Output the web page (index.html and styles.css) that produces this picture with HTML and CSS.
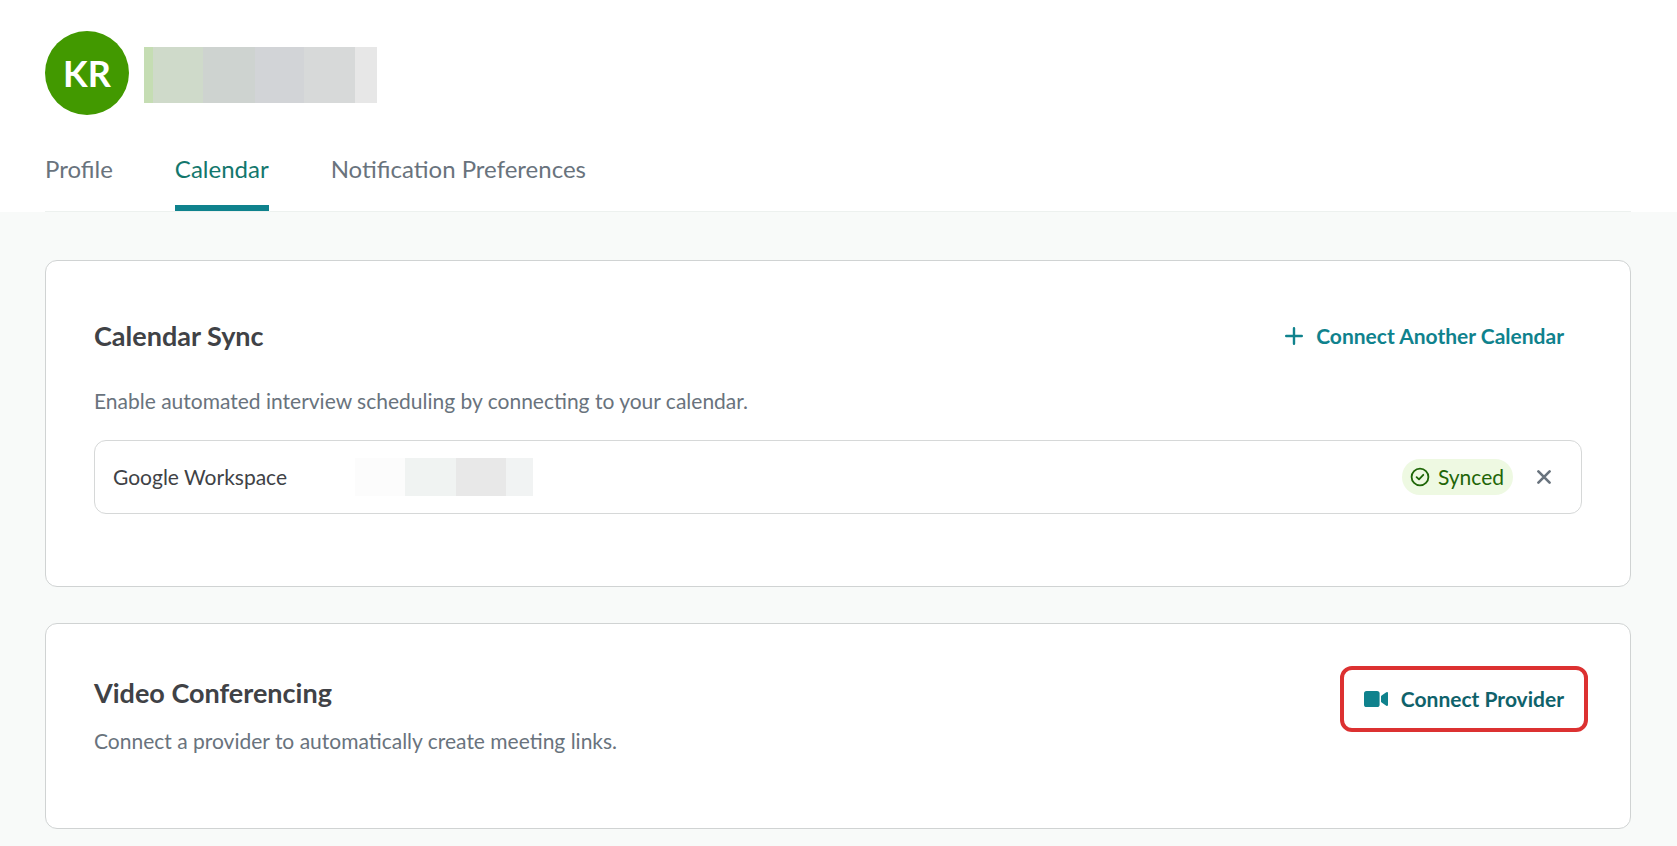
FILE: index.html
```html
<!DOCTYPE html>
<html lang="en">
<head>
<meta charset="utf-8">
<title>Calendar settings</title>
<link rel="stylesheet" href="styles.css">
</head>
<body>
<header class="header">
  <div class="user">
    <span class="avatar">KR</span>
    <span class="user-name" aria-hidden="true"></span>
  </div>
  <nav class="tabs">
    <a class="tab" href="#profile">Profile</a>
    <a class="tab tab-active" href="#calendar" aria-current="page">Calendar</a>
    <a class="tab" href="#notifications">Notification Preferences</a>
  </nav>
</header>
<main class="content">
  <section class="card card-sync">
    <div class="card-head">
      <h2 class="card-title">Calendar Sync</h2>
      <button class="action" type="button">
        <svg class="icon-plus" viewBox="0 0 18 18" aria-hidden="true"><path d="M9 1.200v15.600M1.200 9h15.600" fill="none" stroke="currentColor" stroke-width="2.4" stroke-linecap="round"/></svg>
        Connect Another Calendar
      </button>
    </div>
    <p class="card-text">Enable automated interview scheduling by connecting to your calendar.</p>
    <div class="account">
      <span class="account-name">Google Workspace</span>
      <span class="account-mail" aria-hidden="true"></span>
      <span class="badge">
        <svg class="icon-check" viewBox="0 0 20 20" aria-hidden="true"><g fill="none" stroke="currentColor" stroke-width="1.8" stroke-linecap="round" stroke-linejoin="round"><circle cx="10" cy="10" r="8.4"/><path d="M6.600 10.200l2.400 2.200 4.300-4.600"/></g></svg>
        Synced
      </span>
      <button class="remove" type="button" aria-label="Remove calendar">
        <svg class="icon-close" viewBox="0 0 14 14" aria-hidden="true"><path d="M1.400 1.400l11.200 11.200M12.600 1.400L1.400 12.600" fill="none" stroke="currentColor" stroke-width="2.600" stroke-linecap="round"/></svg>
      </button>
    </div>
  </section>
  <section class="card card-video">
    <div class="card-intro">
      <h2 class="card-title">Video Conferencing</h2>
      <p class="card-text">Connect a provider to automatically create meeting links.</p>
    </div>
    <button class="action action-highlight" type="button">
      <svg class="icon-video" viewBox="0 0 24 16" aria-hidden="true"><rect width="15.600" height="16" rx="2.600" fill="currentColor"/><path d="M17 5.600v4.900q0 .7.6 1.100l4.700 3.100q1.700.8 1.700-.9V2.200q0-1.700-1.700-.9L17.600 4.500q-.6.400-.6 1.100z" fill="currentColor"/></svg>
      Connect Provider
    </button>
  </section>
</main>
</body>
</html>
```

FILE: styles.css
```css
* { box-sizing: border-box; }

body {
  margin: 0;
  background: #f8faf9;
  color: #404246;
  font-family: Lato, "Liberation Sans", sans-serif;
  font-size: 21px;
  line-height: 32px;
}

h2, p { margin: 0; }

button {
  border: 0;
  background: none;
  font: inherit;
  cursor: pointer;
}

svg { display: block; flex: none; }

.header {
  padding: 31px 46px 0 45px;
  background: #fff;
}

.user {
  display: flex;
  align-items: center;
  gap: 15px;
}

.avatar {
  display: grid;
  place-items: center;
  width: 84px;
  height: 84px;
  border-radius: 50%;
  background: #429900;
  color: #fff;
  font-size: 36px;
  font-weight: 700;
}

.user-name {
  width: 233px;
  height: 56px;
  margin-top: 4px;
  background: linear-gradient(90deg,
    #c5ddb3 0 9px, #cfdaca 9px 59px, #ced3d0 59px 111px,
    #d2d4d7 111px 160px, #d7d9d9 160px 211px, #e7e7e7 211px);
}

.tabs {
  display: flex;
  gap: 62px;
  margin-top: 36px;
  border-bottom: 1px solid #edf1ef;
}

.tab {
  padding: 2px 0 20px;
  border-bottom: 6px solid transparent;
  color: #69737d;
  font-size: 24px;
  text-decoration: none;
}

.tab-active {
  border-color: #0f828d;
  color: #13776d;
}

.content {
  display: flex;
  flex-direction: column;
  gap: 36px;
  padding: 48px 46px 17px 45px;
}

.card {
  padding: 48px;
  border: 1px solid #d0d3d3;
  border-radius: 12px;
  background: #fff;
}

.card-sync { padding-bottom: 72px; }

.card-head, .card-video {
  display: flex;
  justify-content: space-between;
}

.card-head { align-items: center; }

.card-video {
  align-items: flex-start;
  padding-bottom: 71px;
}

.card-title {
  font-size: 27px;
  font-weight: 700;
  line-height: 42px;
}

.card-text { color: #69737d; }

.card-head + .card-text { margin: 22px 0 23px; }

.card-intro {
  display: grid;
  gap: 11px;
}

.action {
  display: flex;
  align-items: center;
  gap: 13px;
  padding: 11px 18px;
  border-radius: 6px;
  color: #0f828d;
  font-weight: 700;
}

.action-highlight {
  outline: 4px solid #dc3131;
  outline-offset: 2px;
  color: #0f626b;
}

.icon-plus { width: 18px; height: 18px; }
.icon-video { width: 24px; height: 16px; color: #0f828d; }
.icon-check { width: 20px; height: 20px; }
.icon-close { width: 14px; height: 14px; }

.account {
  display: flex;
  align-items: center;
  padding: 17px 18px;
  border: 1px solid #d6d8d8;
  border-radius: 12px;
}

.account-mail {
  width: 178px;
  height: 38px;
  margin: 0 auto 0 68px;
  background: linear-gradient(90deg,
    #fcfcfc 0 50px, #f0f3f2 50px 101px, #e8e8e8 101px 151px, #f1f3f3 151px);
}

.badge {
  display: flex;
  align-items: center;
  gap: 8px;
  padding: 2px 9px 2px 8px;
  border-radius: 18px;
  background: #eef9e2;
  color: #1f6608;
}

.remove {
  margin-left: 12px;
  padding: 12px;
  color: #69737d;
}
```
